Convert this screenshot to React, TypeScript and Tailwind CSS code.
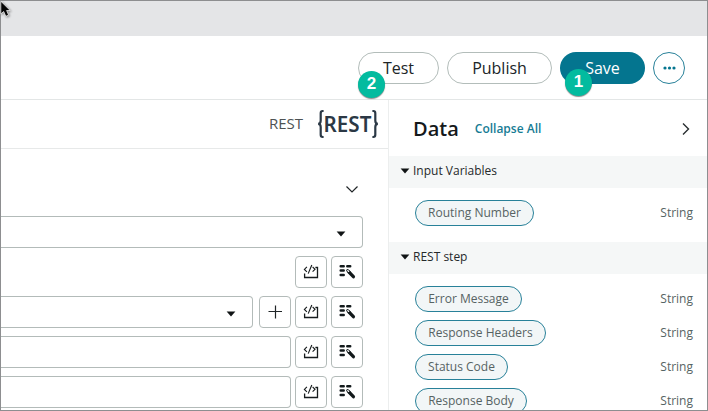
import React from "react";

const sans = "font-['Open_Sans','Noto_Sans',sans-serif]";

function Box({ children }: { children: React.ReactNode }) {
  return (
    <button className="flex h-8 w-8 shrink-0 items-center justify-center rounded-[4px] border border-[#b3bbb9] bg-white">
      {children}
    </button>
  );
}

function CodeBox() {
  return (
    <Box>
      <svg width="30" height="30" viewBox="0 0 30 30" fill="none" stroke="#161b1d" strokeWidth="1.15">
        <path d="M10.9 9.9 8.4 12.4 10.9 14.9M12.2 16.6 15.8 8M16.6 9.9 19 12.3 16.6 14.7" />
        <path d="M8.6 16.6V20.5H21.5V10.5H19.4" strokeWidth="1.3" />
      </svg>
    </Box>
  );
}

function WandBox() {
  return (
    <Box>
      <svg width="30" height="30" viewBox="0 0 30 30" fill="none" stroke="#12191b" strokeLinecap="round">
        <path d="M8.7 9.3H11.7M15.3 9.3H18.2M8.7 13.6H11.7M8.7 17.9H11.7" strokeWidth="2.5" />
        <path d="M17 15.1 21.4 19.7" strokeWidth="3.3" />
        <path d="M15.6 13.5 17.8 15.7" strokeWidth="2.8" />
        <path d="M15.7 13.5 16.7 14.5" stroke="#fff" strokeWidth="1.1" />
      </svg>
    </Box>
  );
}

function Down({ className }: { className: string }) {
  return (
    <svg width="10" height="6" viewBox="0 0 10 6" className={className}>
      <path d="M0.6 0.5H9.4L5 5.4Z" fill="#101415" />
    </svg>
  );
}

function Field({ select }: { select?: boolean }) {
  return (
    <div className="flex h-8 flex-1 items-center justify-end rounded-r-[4px] border border-l-0 border-[#b3bbb9] pr-4">
      {select && <Down className="mt-[3px]" />}
    </div>
  );
}

function Section({ title }: { title: string }) {
  return (
    <div className="flex h-8 shrink-0 items-center bg-[#f5f7f7] pb-[3px] pl-[11px]">
      <Down className="mr-[3px]" />
      <span className="text-[12px] text-[#25292b]">{title}</span>
    </div>
  );
}

function Variable({ name, width }: { name: string; width: string }) {
  return (
    <div className="flex h-[26px] shrink-0 items-center justify-between pr-[15px] pl-[26px]">
      <span className={`flex h-[26px] items-center justify-center whitespace-nowrap rounded-full border border-[#288199] bg-[#f2f6f7] text-[12px] text-[#566363] ${width}`}>
        {name}
      </span>
      <span className="text-[12px] text-[#566363]">String</span>
    </div>
  );
}

function Badge({ n, className }: { n: number; className: string }) {
  return (
    <span
      className={`absolute flex h-[27px] w-[27px] items-center justify-center rounded-full bg-[#03bb9f] font-['Liberation_Sans',Arial,sans-serif] text-[17px] font-bold text-white shadow-[0_1px_1px_rgba(0,0,0,0.45)] ${className}`}
    >
      {n}
    </span>
  );
}

export default function App() {
  return (
    <div className={`relative flex h-[411px] w-[708px] flex-col overflow-hidden bg-white ${sans}`}>
      <div className="h-9 shrink-0 bg-[#e4e5e7]" />
      <header className="flex h-16 shrink-0 items-center justify-end gap-2 border-b border-[#e3e6e6] pr-[23px] text-[16px] text-[#202527]">
        <button className="relative h-8 w-[81px] rounded-full border border-[#b3bdba]">
          Test
          <Badge n={2} className="top-[18px] -left-px" />
        </button>
        <button className="h-8 w-[105px] rounded-full border border-[#b3bdba]">Publish</button>
        <button className="relative h-8 w-[85px] rounded-full bg-[#04758f] text-white">
          Save
          <Badge n={1} className="top-[17px] left-[5px]" />
        </button>
        <button className="flex h-8 w-8 items-center justify-center rounded-full border border-[#288199]">
          <svg width="13" height="4" viewBox="0 0 13 4" fill="#04758f">
            <circle cx="2" cy="2" r="1.6" />
            <circle cx="6.5" cy="2" r="1.6" />
            <circle cx="11" cy="2" r="1.6" />
          </svg>
        </button>
      </header>
      <main className="flex min-h-0 flex-1">
        <section className="flex w-[388px] shrink-0 flex-col">
          <div className="flex h-[49px] shrink-0 items-center justify-end border-b border-[#e7e9e9] pr-[9px]">
            <span className="mr-[14px] pb-px text-[15px] text-[#4d5253]">REST</span>
            <svg width="62" height="30" viewBox="0 0 62 30">
              <g fill="none" stroke="#2b3845" strokeWidth="2.2">
                <path d="M6.6 2H5.7Q3.7 2 3.7 4.2V11.5Q3.7 14.8 1.1 14.8Q3.7 14.8 3.7 18V25.8Q3.7 28 5.7 28H6.6" />
                <path d="M55.4 2H56.3Q58.3 2 58.3 4.2V11.5Q58.3 14.8 60.9 14.8Q58.3 14.8 58.3 18V25.8Q58.3 28 56.3 28H55.4" />
              </g>
              <text x="6.6" y="22.8" textLength="47.8" lengthAdjust="spacingAndGlyphs" fontFamily="Noto Sans" fontWeight="600" fontSize="21.5" fill="#2b3845">
                REST
              </text>
            </svg>
          </div>
          <div className="flex h-[67px] shrink-0 items-start justify-end pt-[37px] pr-[30px]">
            <svg width="12" height="7" viewBox="0 0 12 7" fill="none" stroke="#202527" strokeWidth="1.2">
              <path d="M.5 .5 6 6 11.5 .5" />
            </svg>
          </div>
          <div className="flex flex-col gap-2 pr-[25px]">
            <div className="flex"><Field select /></div>
            <div className="flex justify-end gap-1"><CodeBox /><WandBox /></div>
            <div className="flex gap-1">
              <div className="mr-0.5 flex flex-1"><Field select /></div>
              <Box>
                <svg width="14" height="14" viewBox="0 0 14 14" stroke="#202527" strokeWidth="1.2">
                  <path d="M7.5 .5V13.5M.5 6.5H14" />
                </svg>
              </Box>
              <CodeBox /><WandBox />
            </div>
            <div className="flex gap-1"><Field /><CodeBox /><WandBox /></div>
            <div className="flex gap-1"><Field /><CodeBox /><WandBox /></div>
          </div>
        </section>
        <aside className="flex flex-1 flex-col border-l border-[#eceeee]">
          <div className="flex h-14 shrink-0 items-center pt-px pr-[18px] pl-6">
            <h2 className="text-[20px] font-semibold text-[#15191b]">Data</h2>
            <a className="ml-4 text-[12px] font-semibold text-[#167c94]">Collapse All</a>
            <svg className="ml-auto" width="8" height="12" viewBox="0 0 8 12" fill="none" stroke="#292e30" strokeWidth="1.4">
              <path d="M1 .5 6.5 6 1 11.5" />
            </svg>
          </div>
          <Section title="Input Variables" />
          <div className="pt-3 pb-4"><Variable name="Routing Number" width="w-[119px]" /></div>
          <Section title="REST step" />
          <div className="flex flex-col gap-2 pt-3">
            <Variable name="Error Message" width="w-[107px]" />
            <Variable name="Response Headers" width="w-[131px]" />
            <Variable name="Status Code" width="w-[93px]" />
            <Variable name="Response Body" width="w-[112px]" />
          </div>
        </aside>
      </main>
      <div className="pointer-events-none absolute inset-0 border border-[#8d8e90]" />
      <svg className="absolute top-px left-0 drop-shadow-[1px_1px_1px_rgba(0,0,0,0.4)]" width="12" height="17" viewBox="0 0 12 17">
        <path d="M.8 .2V12.9L3.7 10.5 5.8 15.3 8.6 14.1 6.6 9.5H10.2Z" fill="#050505" stroke="#fff" strokeWidth=".7" />
      </svg>
    </div>
  );
}
